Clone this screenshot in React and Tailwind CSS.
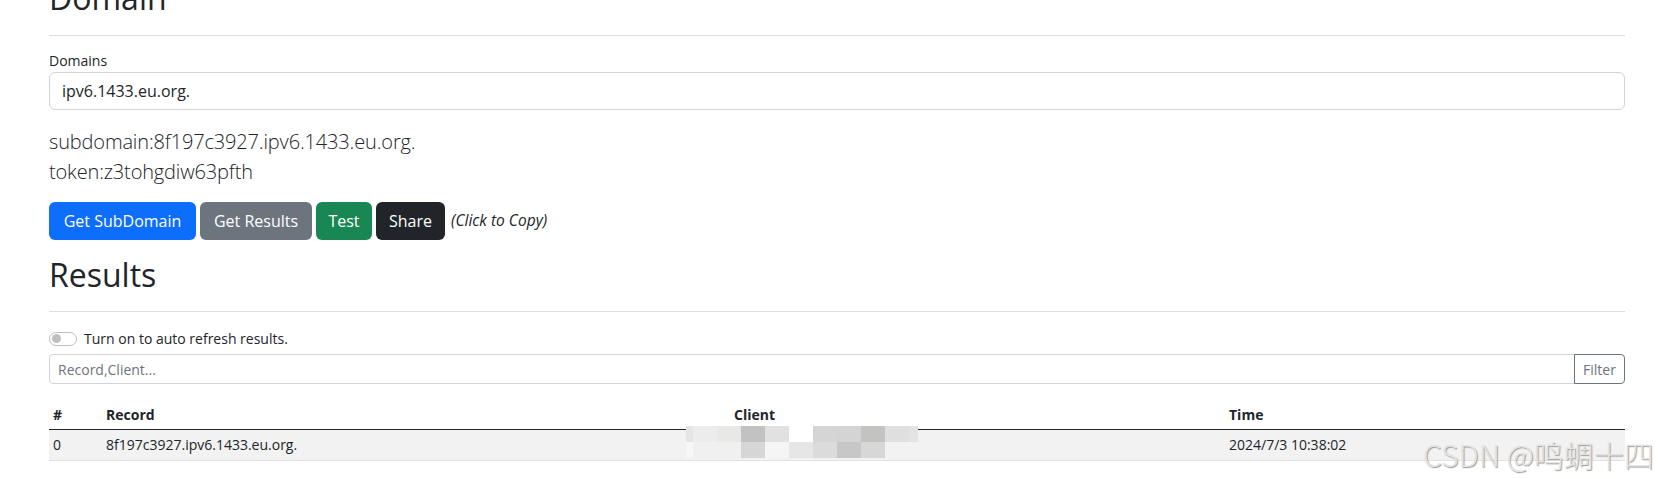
import { useState } from 'react'

const mosaic = [
  // [x, y, w, h, color] relative to the mosaic box
  [0, 0, 7, 16, '#e4e5e5'],
  [7, 0, 24, 16, '#ececec'],
  [31, 0, 24, 16, '#e8e8e6'],
  [55, 0, 24, 16, '#c2c2c3'],
  [79, 0, 24, 16, '#e0e1e0'],
  [103, 0, 24, 16, '#ffffff'],
  [127, 0, 24, 16, '#d5d5d6'],
  [151, 0, 24, 16, '#d4d4d5'],
  [175, 0, 24, 16, '#c3c3c1'],
  [199, 0, 24, 16, '#dfdfe0'],
  [223, 0, 9, 16, '#e3e3e3'],
  [0, 16, 7, 16, '#f7f7f7'],
  [7, 16, 24, 16, '#f0f0f0'],
  [31, 16, 24, 16, '#f0f0f0'],
  [55, 16, 24, 16, '#d5d6d5'],
  [79, 16, 24, 16, '#f4f5f4'],
  [103, 16, 24, 16, '#e6e6e6'],
  [127, 16, 24, 16, '#dbdbdc'],
  [151, 16, 24, 16, '#c6c7c6'],
  [175, 16, 24, 16, '#d6d7d6'],
]

const rows = [{ id: 0, record: '8f197c3927.ipv6.1433.eu.org.', time: '2024/7/3 10:38:02' }]

export default function App() {
  const [autoRefresh, setAutoRefresh] = useState(false)

  return (
    <div
      className="relative h-[479px] overflow-hidden bg-white text-[#212529]"
      style={{ fontFamily: '"Open Sans", "Noto Sans", sans-serif' }}
    >
      <div className="ml-[49px] -mt-[21px] w-[1576px]">
        <h2 className="text-[32px] leading-[38px] font-normal">Domain</h2>
        <div className="mt-[18px] border-t border-[#dcdde2]" />

        <label className="mt-[14px] mb-[1px] block text-[14px] leading-[21px]">Domains</label>
        <input
          readOnly
          value="ipv6.1433.eu.org."
          className="block h-[38px] w-full rounded-[6px] border border-[#ced4da] px-3 text-[16px] outline-none"
        />

        <div className="mt-[17px] text-[20px] leading-[30px] font-light tracking-[-0.15px]">
          <div>subdomain:8f197c3927.ipv6.1433.eu.org.</div>
          <div>token:z3tohgdiw63pfth</div>
        </div>

        <div className="mt-[15px] flex items-center gap-[4px]">
          <button className="h-[38px] w-[147px] rounded-[6px] bg-[#0d6efd] text-[16px] text-white">Get SubDomain</button>
          <button className="h-[38px] w-[112px] rounded-[6px] bg-[#6c757d] text-[16px] text-white">Get Results</button>
          <button className="h-[38px] w-[56px] rounded-[6px] bg-[#198754] text-[16px] text-white">Test</button>
          <button className="h-[38px] w-[69px] rounded-[6px] bg-[#212529] text-[16px] text-white">Share</button>
          <span className="ml-[2px] text-[15.5px] italic">(Click to Copy)</span>
        </div>

        <h2 className="mt-[16px] text-[32px] leading-[38px] font-normal">Results</h2>
        <div className="mt-[17px] border-t border-[#dcdde2]" />

        <label className="mt-[16px] flex items-center text-[14px] leading-[21px]">
          <span
            onClick={() => setAutoRefresh(!autoRefresh)}
            className="flex h-[14px] w-[28px] items-center rounded-full border border-[#bfbfbf] px-[2px]"
          >
            <span className="h-[9px] w-[9px] rounded-full bg-[#bfbfbf]" />
          </span>
          <span className="ml-[7px]">Turn on to auto refresh results.</span>
        </label>

        <div className="mt-[5px] flex h-[30px]">
          <input
            placeholder="Record,Client..."
            className="min-w-0 flex-1 rounded-l-[4px] border border-[#ced4da] px-2 text-[14px] outline-none placeholder:text-[#6c757d]"
          />
          <button className="-ml-px w-[51px] rounded-r-[4px] border border-[#6c757d] text-[14px] text-[#6c757d]">
            Filter
          </button>
        </div>

        <div className="relative mt-[16px]">
          <table className="w-full table-fixed border-collapse text-left text-[14px] leading-[21px]">
            <colgroup>
              <col className="w-[53px]" />
              <col className="w-[628px]" />
              <col className="w-[495px]" />
              <col />
            </colgroup>
            <thead>
              <tr className="border-b border-[#212529]">
                <th className="px-1 py-1 font-bold">#</th>
                <th className="px-1 py-1 font-bold">Record</th>
                <th className="px-1 py-1 font-bold">Client</th>
                <th className="px-1 py-1 font-bold">Time</th>
              </tr>
            </thead>
            <tbody>
              {rows.map((r) => (
                <tr key={r.id} className="border-b border-[#dee2e6] bg-[#f2f2f2] leading-[22px]">
                  <td className="px-1 py-1">{r.id}</td>
                  <td className="px-1 py-1">{r.record}</td>
                  <td className="px-1 py-1" />
                  <td className="px-1 py-1">{r.time}</td>
                </tr>
              ))}
            </tbody>
          </table>
          {/* pixelated client address */}
          <svg className="absolute left-[637px] top-[26px]" width="232" height="32" viewBox="0 0 232 32">
            {mosaic.map(([x, y, w, h, c], i) => (
              <rect key={i} x={x} y={y} width={w} height={h} fill={c} />
            ))}
          </svg>
        </div>
      </div>

      <div
        className="absolute left-[1423px] top-[432px] whitespace-nowrap text-[30px] font-light text-[#e4e4e4]"
        style={{
          fontFamily: '"Noto Sans CJK SC", sans-serif',
          textShadow: '1px 1px 1px #9a9a9a',
        }}
      >
        CSDN @鸣蜩十四
      </div>
    </div>
  )
}
